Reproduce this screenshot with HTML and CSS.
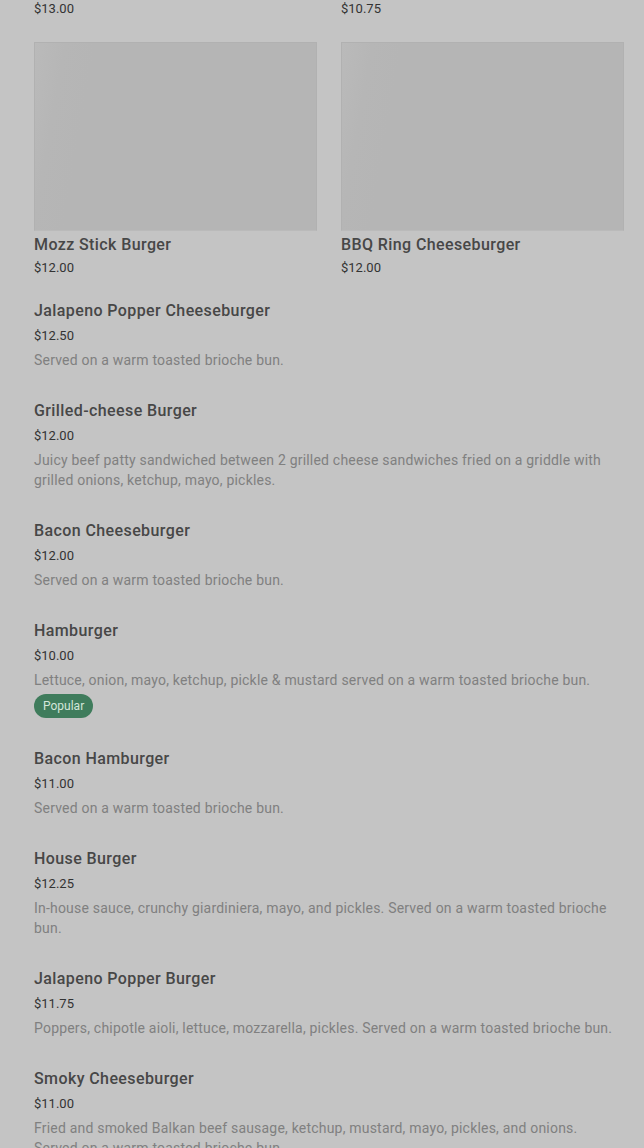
FILE: index.html
```html
<!DOCTYPE html>
<html lang="en">
<head>
    <meta charset="UTF-8">
    <meta name="viewport" content="width=device-width, initial-scale=1.0">
    <title>Burgers - Menu</title>
    <link rel="stylesheet" href="styles.css">
</head>
<body>
    <div class="menu">
        <div class="card-grid top-row">
            <div class="card"><div class="card-price">$13.00</div></div>
            <div class="card"><div class="card-price">$10.75</div></div>
        </div>

        <div class="card-grid">
            <div class="card">
                <div class="card-img"></div>
                <div class="card-title">Mozz Stick Burger</div>
                <div class="card-price">$12.00</div>
            </div>
            <div class="card">
                <div class="card-img"></div>
                <div class="card-title">BBQ Ring Cheeseburger</div>
                <div class="card-price">$12.00</div>
            </div>
        </div>

        <ul class="item-list">
            <li class="item">
                <div class="item-title">Jalapeno Popper Cheeseburger</div>
                <div class="item-price">$12.50</div>
                <div class="item-desc">Served on a warm toasted brioche bun.</div>
            </li>
            <li class="item">
                <div class="item-title">Grilled-cheese Burger</div>
                <div class="item-price">$12.00</div>
                <div class="item-desc">Juicy beef patty sandwiched between 2 grilled cheese sandwiches fried on a griddle with grilled onions, ketchup, mayo, pickles.</div>
            </li>
            <li class="item">
                <div class="item-title">Bacon Cheeseburger</div>
                <div class="item-price">$12.00</div>
                <div class="item-desc">Served on a warm toasted brioche bun.</div>
            </li>
            <li class="item">
                <div class="item-title">Hamburger</div>
                <div class="item-price">$10.00</div>
                <div class="item-desc">Lettuce, onion, mayo, ketchup, pickle &amp; mustard served on a warm toasted brioche bun.</div>
                <div class="badge">Popular</div>
            </li>
            <li class="item">
                <div class="item-title">Bacon Hamburger</div>
                <div class="item-price">$11.00</div>
                <div class="item-desc">Served on a warm toasted brioche bun.</div>
            </li>
            <li class="item">
                <div class="item-title">House Burger</div>
                <div class="item-price">$12.25</div>
                <div class="item-desc">In-house sauce, crunchy giardiniera, mayo, and pickles. Served on a warm toasted brioche bun.</div>
            </li>
            <li class="item">
                <div class="item-title">Jalapeno Popper Burger</div>
                <div class="item-price">$11.75</div>
                <div class="item-desc">Poppers, chipotle aioli, lettuce, mozzarella, pickles. Served on a warm toasted brioche bun.</div>
            </li>
            <li class="item">
                <div class="item-title">Smoky Cheeseburger</div>
                <div class="item-price">$11.00</div>
                <div class="item-desc">Fried and smoked Balkan beef sausage, ketchup, mustard, mayo, pickles, and onions. Served on a warm toasted brioche bun.</div>
            </li>
        </ul>
    </div>
</body>
</html>
```

FILE: styles.css
```css
body { margin: 0; background: #c4c4c4; font-family: Roboto, "Liberation Sans", sans-serif; color: #3c3c3c; overflow: hidden; }
.menu { padding: 0 20px 0 34px; }
.card-grid { display: grid; grid-template-columns: 1fr 1fr; gap: 24px; }
.top-row { padding-top: 1px; margin-bottom: 25px; }
.card-img { height: 189px; background: linear-gradient(100deg, #bababa 0, #b6b6b6 30px, #b5b5b5 60px); border: 1px solid #b1b1b1; border-bottom-color: #bababa; box-sizing: border-box; }
.card-title { font-size: 16px; font-weight: 500; line-height: 20px; margin-top: 4px; color: #474747; letter-spacing: 0.4px; }
.card-price { font-size: 13px; line-height: 16px; margin-top: 5px; color: #333; }
.top-row .card-price { margin-top: 0; }
.item-list { list-style: none; margin: 25px 0 0; padding: 0; }
.item { margin-bottom: 31px; }
.item-title { font-size: 16px; font-weight: 500; line-height: 20px; color: #474747; letter-spacing: 0.4px; }
.item-price { font-size: 13px; line-height: 16px; margin-top: 7px; color: #333; }
.item-desc { font-size: 14px; line-height: 20px; margin-top: 6px; color: #808080; letter-spacing: 0.2px; padding-right: 8px; }
.badge { width: fit-content; margin-top: 4px; padding: 0 9px; height: 24px; line-height: 24px; border-radius: 12px; background: #3f7c5c; color: #d3e6da; font-size: 12px; }
```
